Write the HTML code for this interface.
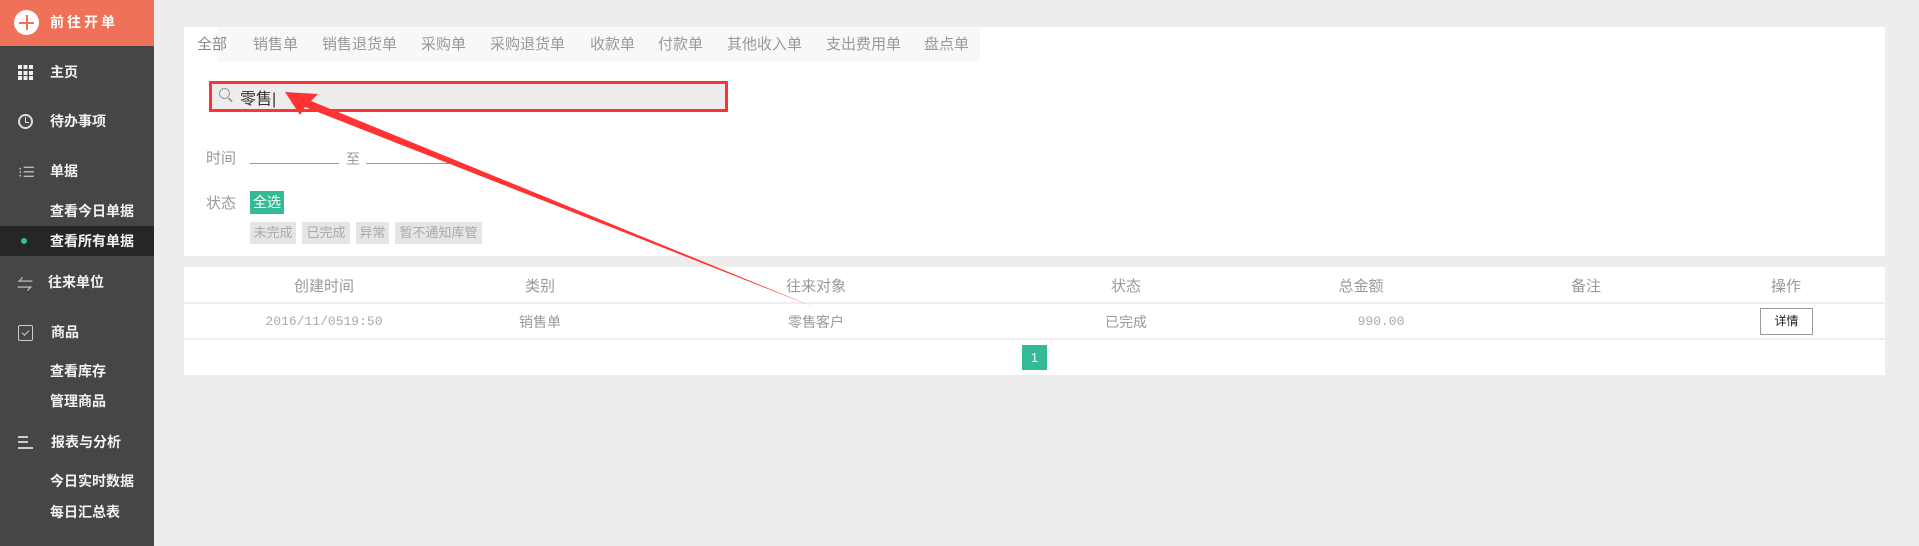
<!DOCTYPE html>
<html><head><meta charset="utf-8"><style>
*{margin:0;padding:0;box-sizing:border-box}
body{width:1919px;height:546px;background:#ededed;font-family:"Liberation Sans","Noto Sans CJK SC",sans-serif;position:relative;overflow:hidden}
.sb{position:absolute;left:0;top:0;width:154px;height:546px;background:#464646}
.hd{position:absolute;left:0;top:0;width:154px;height:46px;background:#ef7157}
.it{position:absolute;left:0;width:154px;color:#f2f2f2;font-size:14px;font-weight:bold;line-height:20px}
.a{position:absolute;font-size:15px;color:#999;white-space:nowrap}
.tab{position:absolute;top:27px;height:35px;line-height:35px;font-size:15px;color:#999}
.btn{position:absolute;top:222px;height:22px;line-height:22px;background:#e5e5e5;color:#aaa;font-size:13px;text-align:center}
.c{position:absolute;transform:translateX(-50%);white-space:nowrap;font-size:15px;color:#999}
</style></head><body>
<div class="sb">
<div class="hd"></div>
<div style="position:absolute;left:14px;top:10px;width:25px;height:25px;border-radius:50%;background:#fff"></div>
<div style="position:absolute;left:19px;top:21.5px;width:15px;height:2px;background:#ef7157"></div>
<div style="position:absolute;left:25.5px;top:15px;width:2px;height:15px;background:#ef7157"></div>
<div class="it" style="top:12px;left:50px;letter-spacing:3px;color:#fff">前往开单</div>
<div class="it" style="top:62px;left:50px">主页</div>
<div style="position:absolute;left:18px;top:65px;width:15px;height:15px;background-image:linear-gradient(90deg,#eee 4px,transparent 4px,transparent 5.5px,#eee 5.5px,#eee 9.5px,transparent 9.5px,transparent 11px,#eee 11px)"></div>
<div style="position:absolute;left:18px;top:69px;width:15px;height:1.5px;background:#464646"></div>
<div style="position:absolute;left:18px;top:74.5px;width:15px;height:1.5px;background:#464646"></div>
<div class="it" style="top:111px;left:50px">待办事项</div>
<div style="position:absolute;left:18px;top:114px;width:15px;height:15px;border:2px solid #ddd;border-radius:50%"></div>
<div style="position:absolute;left:24.5px;top:117px;width:1.5px;height:5px;background:#ddd"></div>
<div style="position:absolute;left:24.5px;top:121.5px;width:4px;height:1.5px;background:#ddd"></div>
<div class="it" style="top:161px;left:50px">单据</div>
<div style="position:absolute;left:18px;top:165px;font-size:14px;color:#bbb;line-height:14px;font-weight:normal">⁝☰</div>
<div class="it" style="top:201px;left:50px">查看今日单据</div>
<div style="position:absolute;left:0;top:226px;width:154px;height:30px;background:#262626"></div>
<div style="position:absolute;left:21px;top:238px;width:6px;height:6px;border-radius:50%;background:#2fbf91"></div>
<div class="it" style="top:231px;left:50px">查看所有单据</div>
<div class="it" style="top:272px;left:48px">往来单位</div>
<div style="position:absolute;left:17px;top:271px;color:#ccc;font-size:16px">⇋</div>
<div class="it" style="top:322px;left:51px">商品</div>
<div style="position:absolute;left:18px;top:325px;width:15px;height:16px;border:1.5px solid #ccc;border-radius:2px"></div>
<div style="position:absolute;left:22px;top:330px;width:7px;height:4px;border-left:1.5px solid #ccc;border-bottom:1.5px solid #ccc;transform:rotate(-45deg)"></div>
<div class="it" style="top:361px;left:50px">查看库存</div>
<div class="it" style="top:391px;left:50px">管理商品</div>
<div class="it" style="top:432px;left:51px">报表与分析</div>
<div style="position:absolute;left:18px;top:436px;width:10px;height:1.5px;background:#ccc"></div>
<div style="position:absolute;left:18px;top:441px;width:10px;height:1.5px;background:#ccc"></div>
<div style="position:absolute;left:18px;top:447px;width:15px;height:1.5px;background:#ccc"></div>
<div class="it" style="top:471px;left:50px">今日实时数据</div>
<div class="it" style="top:502px;left:50px">每日汇总表</div>
</div>

<div style="position:absolute;left:184px;top:27px;width:1701px;height:229px;background:#fff"></div>
<div style="position:absolute;left:218px;top:27px;width:762px;height:35px;background:#f8f8f8"></div>
<div class="tab" style="left:197px;color:#888">全部</div>
<div class="tab" style="left:253px">销售单</div>
<div class="tab" style="left:322px">销售退货单</div>
<div class="tab" style="left:421px">采购单</div>
<div class="tab" style="left:490px">采购退货单</div>
<div class="tab" style="left:590px">收款单</div>
<div class="tab" style="left:658px">付款单</div>
<div class="tab" style="left:727px">其他收入单</div>
<div class="tab" style="left:826px">支出费用单</div>
<div class="tab" style="left:924px">盘点单</div>

<div style="position:absolute;left:209px;top:81px;width:519px;height:31px;border:3px solid #f33;background:#ededed"></div>
<div style="position:absolute;left:219px;top:88px;width:11px;height:11px;border:1.5px solid #999;border-radius:50%"></div>
<div style="position:absolute;left:228px;top:99px;width:5px;height:1.5px;background:#999;transform:rotate(45deg)"></div>
<div class="a" style="left:240px;top:85px;color:#333;font-size:16px">零售<span style="font-weight:normal">|</span></div>

<div class="a" style="left:206px;top:147px">时间</div>
<div style="position:absolute;left:250px;top:163px;width:89px;height:1px;background:#999"></div>
<div class="a" style="left:346px;top:149px;font-size:14px">至</div>
<div style="position:absolute;left:366px;top:163px;width:89px;height:1px;background:#999"></div>
<div class="a" style="left:206px;top:192px">状态</div>
<div style="position:absolute;left:250px;top:191px;width:34px;height:23px;background:#33bb95;color:#fff;font-size:14px;line-height:23px;text-align:center">全选</div>
<div class="btn" style="left:250px;width:46px">未完成</div>
<div class="btn" style="left:302px;width:48px">已完成</div>
<div class="btn" style="left:356px;width:33px">异常</div>
<div class="btn" style="left:395px;width:87px">暂不通知库管</div>

<div style="position:absolute;left:184px;top:267px;width:1701px;height:108px;background:#fff"></div>
<div style="position:absolute;left:184px;top:302px;width:1701px;height:2px;background:#eee"></div>
<div style="position:absolute;left:184px;top:338px;width:1701px;height:2px;background:#eee"></div>
<div class="c" style="left:324px;top:275px">创建时间</div>
<div class="c" style="left:540px;top:275px">类别</div>
<div class="c" style="left:816px;top:275px">往来对象</div>
<div class="c" style="left:1126px;top:275px">状态</div>
<div class="c" style="left:1361px;top:275px">总金额</div>
<div class="c" style="left:1586px;top:275px">备注</div>
<div class="c" style="left:1786px;top:275px">操作</div>
<div class="c" style="left:324px;top:314px;color:#aaa;font-family:'Liberation Mono',monospace;font-size:13px">2016/11/0519:50</div>
<div class="c" style="left:540px;top:312px;font-size:14px">销售单</div>
<div class="c" style="left:816px;top:312px;font-size:14px">零售客户</div>
<div class="c" style="left:1126px;top:312px;font-size:14px">已完成</div>
<div class="c" style="left:1381px;top:314px;font-size:13px;color:#aaa;font-family:'Liberation Mono',monospace">990.00</div>
<div style="position:absolute;left:1760px;top:308px;width:53px;height:27px;border:1px solid #999;font-size:12px;line-height:25px;text-align:center;color:#222">详情</div>
<div style="position:absolute;left:1022px;top:345px;width:25px;height:25px;background:#33bb95;color:#fff;font-size:13px;line-height:25px;text-align:center">1</div>

<svg style="position:absolute;left:0;top:0" width="1919" height="546">
<polygon points="285,92 318,94 311,101 814,307 305,107 300,115" fill="#f33"/>
</svg>
</body></html>
